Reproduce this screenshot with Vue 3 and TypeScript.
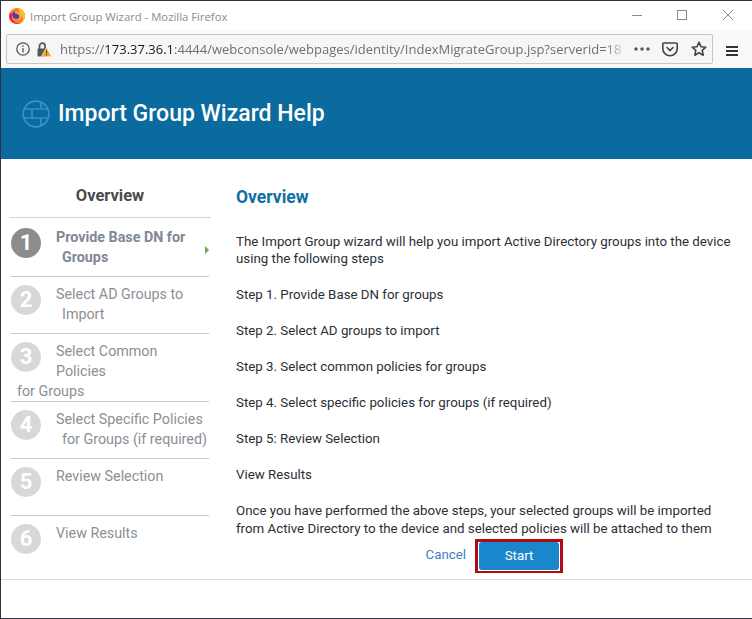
<script setup lang="ts">
interface Step { n: number; text: string; indent?: string; active?: boolean }
const steps: Step[] = [
  { n: 1, text: 'Provide Base DN for', indent: 'Groups', active: true },
  { n: 2, text: 'Select AD Groups to', indent: 'Import' },
  { n: 3, text: 'Select Common Policies', indent: 'for Groups' },
  { n: 4, text: 'Select Specific Policies', indent: 'for Groups (if required)' },
  { n: 5, text: 'Review Selection' },
  { n: 6, text: 'View Results' },
]
const paragraphs: string[] = [
  'Step 1. Provide Base DN for groups',
  'Step 2. Select AD groups to import',
  'Step 3. Select common policies for groups',
  'Step 4. Select specific policies for groups (if required)',
  'Step 5: Review Selection',
  'View Results',
]
</script>

<template>
  <div class="window">
    <div class="titlebar">
      <svg class="fx" width="16" height="16" viewBox="0 0 16 16">
        <circle cx="8" cy="8" r="8" fill="#f4822a" />
        <path d="M9 0a8 8 0 0 1 7 8 8 8 0 0 1-3 6.200c1.500-2.500 1-5.200-1-7C11 6 10.500 3 9 0z" fill="#fdc12f" />
        <path d="M0 7a8 8 0 0 0 8 9 8 8 0 0 0 4-1c-4 1-8-1-9-5 0-2 .5-3.500 2-5C3 4.500 1 5 0 7z" fill="#e8264f" />
        <circle cx="7.500" cy="7" r="3.800" fill="#4a3bb0" />
        <path d="M6 3.500c3-1 6.500 1 6.500 4.500s-3.500 5.500-6 4.500c2.500 0 3.800-2 3.800-3.800S8.500 5.500 6 5.500z" fill="#fca829" />
      </svg>
      <span class="wintitle">Import Group Wizard - Mozilla Firefox</span>
      <div class="controls">
        <svg width="102" height="12" viewBox="0 0 102 12" fill="none" stroke="#8a8a8a" stroke-width="1">
          <path d="M0 6.500h10" />
          <rect x="45.500" y="1.500" width="9" height="9" />
          <path d="M91 1l10 10M101 1L91 11" />
        </svg>
      </div>
    </div>
    <div class="toolbar">
      <div class="urlbar">
        <svg class="ic-info" width="14" height="14" viewBox="0 0 14 14" fill="none" stroke="#555" stroke-width="1.300">
          <circle cx="7" cy="7" r="6.200" />
          <path d="M7 6v4.500M7 3.200v1.600" />
        </svg>
        <svg class="ic-lock" width="15" height="15" viewBox="0 0 15 15">
          <path d="M2.500 7V4a2.800 2.800 0 0 1 5.600 0v3" fill="none" stroke="#555" stroke-width="1.700" />
          <rect x="0.500" y="6.500" width="10" height="8" rx="1" fill="#555" />
          <path d="M9.500 5.500l5.300 9.300H4.200z" fill="#f7a823" stroke="#f6f6f6" stroke-width=".7" />
          <path d="M9.500 8.500v3M9.500 12.300v1.200" stroke="#3a3a3a" stroke-width="1" />
        </svg>
        <div class="url"><span class="dim">https://</span><span class="host">173.37.36.1</span><span class="dim">:4444/webconsole/webpages/identity/IndexMigrateGroup.jsp?serverid=18</span></div>
        <svg class="ic-dots" width="16" height="4" viewBox="0 0 16 4" fill="#555">
          <circle cx="2" cy="2" r="1.700" />
          <circle cx="8" cy="2" r="1.700" />
          <circle cx="14" cy="2" r="1.700" />
        </svg>
        <svg class="ic-pocket" width="16" height="15" viewBox="0 0 16 15" fill="none" stroke="#444" stroke-width="1.600">
          <path d="M1.800 1h12.400a1 1 0 0 1 1 1v4.500a7.200 7.200 0 0 1-14.400 0V2a1 1 0 0 1 1-1z" />
          <path d="M5 5.500l3 3 3-3" stroke-linecap="round" />
        </svg>
        <svg class="ic-star" width="16" height="16" viewBox="0 0 16 16" fill="none" stroke="#444" stroke-width="1.600" stroke-linejoin="round">
          <path d="M8 1.300l2 4.400 4.800.5-3.600 3.200 1 4.800L8 11.800l-4.200 2.400 1-4.800L1.200 6.200 6 5.700z" />
        </svg>
      </div>
      <div class="menu"><i /><i /><i /></div>
    </div>

    <header class="banner">
      <svg class="globe" width="28" height="28" viewBox="0 0 28 28" fill="none" stroke="#3b8fce" stroke-width="1.700">
        <circle cx="14" cy="14" r="12.800" />
        <path d="M2.500 9h23M2 18h24M19 2v7M10 9v9M19 18v8" />
      </svg>
      <h1>Import Group Wizard Help</h1>
    </header>

    <main class="body">
      <aside class="side">
        <h2>Overview</h2>
        <div v-for="s in steps" :key="s.n" class="step" :class="{ active: s.active }">
          <span class="num">{{ s.n }}</span>
          <span class="label">{{ s.text }}<template v-if="s.indent"><br /><span class="ind">{{ s.indent }}</span></template></span>
          <span v-if="s.active" class="arrow" />
        </div>
      </aside>
      <section class="content">
        <h3>Overview</h3>
        <p class="intro">The Import Group wizard will help you import Active Directory groups into the device using the following steps</p>
        <p v-for="t in paragraphs" :key="t">{{ t }}</p>
        <p class="last">Once you have performed the above steps, your selected groups will be imported from Active Directory to the device and selected policies will be attached to them</p>
        <div class="actions">
          <a class="cancel">Cancel</a>
          <span class="mark"><button class="start">Start</button></span>
        </div>
      </section>
    </main>
    <footer class="foot" />
  </div>
</template>

<style>
html, body { margin: 0; background: #fff; }
</style>

<style scoped>
.window {
  width: 752px;
  height: 619px;
  box-sizing: border-box;
  border-top: 1px solid #33333f;
  border-left: 1px solid #33333f;
  border-bottom: 1px solid #33333f;
  display: flex;
  flex-direction: column;
  overflow: hidden;
  background: #fff;
  font-family: Roboto, sans-serif;
}
.titlebar {
  height: 30px;
  display: flex;
  align-items: center;
  flex: none;
  padding-left: 8px;
}
.fx { margin-right: 5px; }
.wintitle {
  font-family: "Open Sans", sans-serif;
  font-size: 11.300px;
  color: #8c8c8c;
}
.controls { margin-left: auto; margin-right: 18px; margin-bottom: 2px; display: flex; }
.toolbar {
  height: 37px;
  flex: none;
  background: #f9f9f9;
  display: flex;
  padding: 3px 0 0 5px;
  box-sizing: border-box;
}
.urlbar {
  width: 707px;
  height: 30px;
  box-sizing: border-box;
  border: 1px solid #c6c6c6;
  border-radius: 2px;
  background: #f6f6f6;
  display: flex;
  align-items: center;
}
.ic-info { margin-left: 9px; }
.ic-lock { margin-left: 7px; }
.url {
  margin-left: 8px;
  width: 568px;
  overflow: hidden;
  white-space: nowrap;
  font-family: "Open Sans", sans-serif;
  font-size: 13px;
  -webkit-mask-image: linear-gradient(to right, #000 545px, transparent 568px);
  mask-image: linear-gradient(to right, #000 545px, transparent 568px);
}
.dim { color: #707070; }
.host { color: #1a1a1a; }
.ic-dots { margin-left: 6px; }
.ic-pocket { margin-left: 12px; }
.ic-star { margin-left: 13px; }
.menu {
  margin: 12px 0 0 13px;
  width: 12px;
  display: flex;
  flex-direction: column;
  gap: 2px;
}
.menu i { display: block; height: 2px; background: #333; }
.banner {
  height: 91px;
  flex: none;
  background: #0b6b9e;
  display: flex;
  align-items: center;
  padding-left: 21px;
  box-sizing: border-box;
}
.banner h1 {
  margin: 0 0 0 8px;
  font-size: 23px;
  font-weight: 500;
  color: #fff;
}
.body {
  flex: 1;
  display: flex;
  min-height: 0;
}
.side {
  width: 202px;
  margin-left: 8px;
  flex: none;
}
.side h2 {
  margin: 0;
  height: 59px;
  box-sizing: border-box;
  padding-top: 27px;
  line-height: 20px;
  text-align: center;
  font-size: 16.500px;
  font-weight: 700;
  color: #4a4a4a;
  border-bottom: 1px solid #d4d4d4;
}
.step {
  position: relative;
  margin: 0 2px;
  min-height: 57px;
  box-sizing: border-box;
  padding-top: 7px;
  border-bottom: 1px solid #c8c8c8;
  font-size: 14.300px;
  line-height: 20px;
  color: #8a8f96;
}
.step:last-child { border-bottom: 0; }
.step.active { padding-top: 9px; min-height: 59px; font-weight: 700; color: #7f8893; }
.num {
  float: left;
  width: 30px;
  height: 30px;
  margin: 1px 15px 0 0;
  border-radius: 50%;
  background: #d8d8d8;
  color: #fff;
  font-size: 22px;
  font-weight: 700;
  line-height: 30px;
  text-align: center;
}
.active .num { background: #8c8c8c; }
.ind { margin-left: 6px; }
.arrow {
  position: absolute;
  right: 0;
  top: 28px;
  border-left: 4px solid #6aa84f;
  border-top: 4px solid transparent;
  border-bottom: 4px solid transparent;
}
.content {
  margin-left: 25px;
  width: 498px;
  flex: none;
  font-size: 13.300px;
  line-height: 18px;
  color: #2b2f36;
}
.content h3 {
  margin: 0;
  padding-top: 28px;
  line-height: 20px;
  font-size: 17.500px;
  font-weight: 700;
  color: #0e6fa4;
}
.content p { margin: 0 0 18px; }
.content p.intro { margin: 26px 0 19px; line-height: 17px; }
.content p.last { margin-bottom: 0; }
.actions {
  margin-top: 1px;
  display: flex;
  justify-content: flex-end;
  align-items: center;
  gap: 9px;
  padding-right: 171px;
}
.cancel { color: #3d7fc1; font-size: 13.300px; margin-bottom: 2px; }
.mark {
  display: flex;
  border-style: solid;
  border-color: #b10a14;
  border-width: 3px 3px 2px;
  padding: 0 1px 1px;
}
.start {
  width: 80px;
  height: 28px;
  border: 0;
  border-radius: 3px;
  padding: 0 0 2px;
  background: #1a87cd;
  color: #fff;
  font: 13.300px Roboto, sans-serif;
}
.foot {
  height: 39px;
  flex: none;
  box-sizing: border-box;
  border-top: 1px solid #dcdcdc;
}
</style>
